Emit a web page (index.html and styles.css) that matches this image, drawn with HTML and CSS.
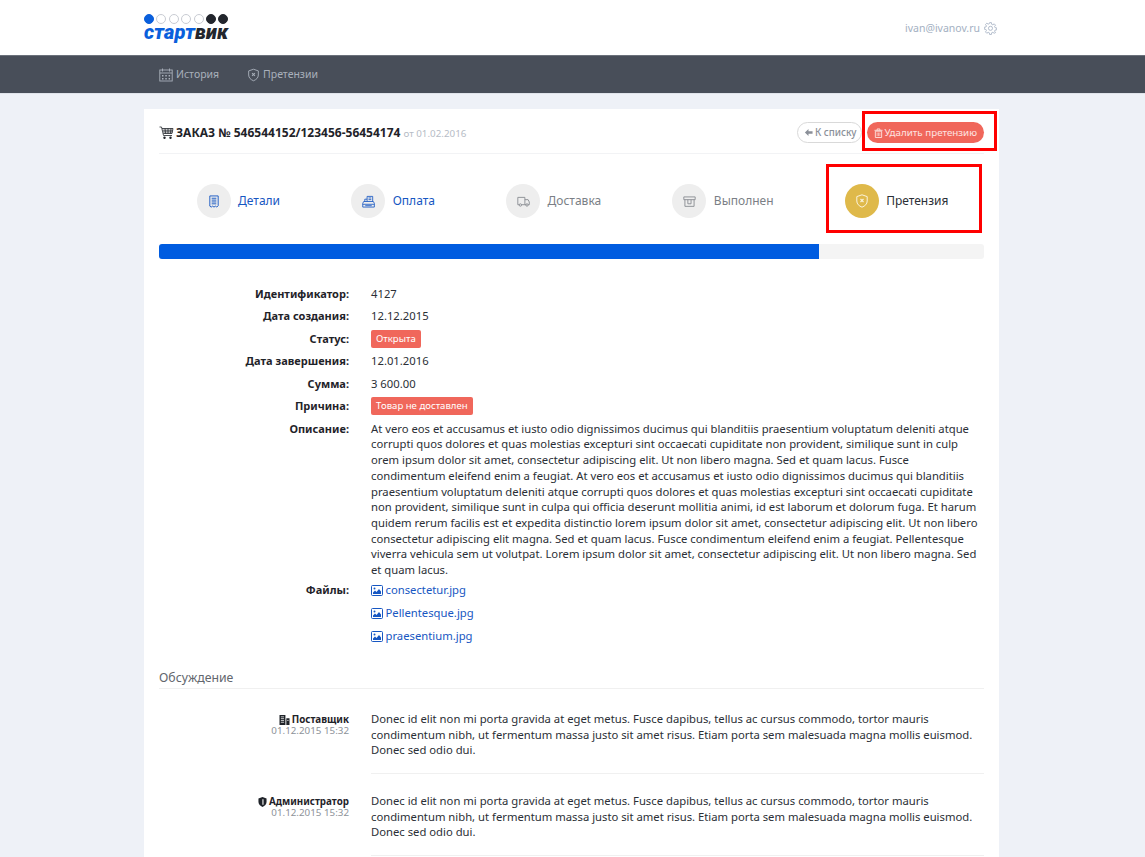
FILE: index.html
```html
<!DOCTYPE html>
<html lang="ru">
<head>
<meta charset="utf-8">
<title>Заказ</title>
<link rel="stylesheet" href="styles.css">
</head>
<body>
<svg class="defs" width="0" height="0">
  <symbol id="i-shield" viewBox="0 0 14 14"><path d="M7 .8 12.2 2.600V7c0 3-2.200 5-5.200 6.200C4 12 1.800 10 1.800 7V2.600Z" fill="none" stroke="currentColor" stroke-width="1"/><path d="M5.500 5 8.500 8M8.500 5 5.500 8" stroke="currentColor" stroke-width="1.100"/></symbol>
  <symbol id="i-img" viewBox="0 0 12 11"><rect x=".5" y=".5" width="11" height="10" rx="1" fill="none" stroke="currentColor"/><path d="M2 9V7.500L4 5.500 5.500 7 8 4l2 2.500V9Z" fill="currentColor"/><circle cx="3.500" cy="3.500" r="1" fill="currentColor"/></symbol>
</svg>
<div class="page">
  <header class="top">
    <div class="wrap top-row">
      <a class="logo">
        <span class="dots"><i class="dot blue"></i><i class="dot"></i><i class="dot"></i><i class="dot"></i><i class="dot"></i><i class="dot dark"></i><i class="dot dark"></i></span>
        <span class="logo-text"><span class="blue-t">старт</span>вик</span>
      </a>
      <div class="user">ivan@ivanov.ru
        <svg class="gear" viewBox="0 0 14 14" width="13" height="13"><path d="M6 .7h2l.3 1.800 1.200.5L11 2l1.400 1.400-1 1.500.5 1.200 1.800.3v2l-1.800.3-.5 1.200 1 1.500L11 12.100l-1.500-1-1.200.5-.3 1.800H6l-.3-1.800-1.200-.5-1.500 1L1.600 10.700l1-1.500-.5-1.200L.3 7.700v-2l1.800-.3.5-1.200-1-1.500L3 1.300l1.500 1 1.200-.5Z" fill="none" stroke="currentColor" stroke-width=".9"/><circle cx="7" cy="6.800" r="2.200" fill="none" stroke="currentColor" stroke-width=".9"/></svg>
      </div>
    </div>
  </header>
  <nav class="nav">
    <div class="wrap nav-row">
      <a class="nav-item"><svg viewBox="0 0 14 14" width="14" height="14"><rect x=".8" y="2" width="12.400" height="11" fill="none" stroke="currentColor" stroke-width=".9"/><path d="M3.500.5v3M10.500.5v3M.8 5h12.400" stroke="currentColor" fill="none" stroke-width=".9"/><path d="M3 7h1.500v1.500H3zM6.300 7h1.500v1.500H6.300zM9.600 7h1.500v1.500H9.600zM3 10h1.500v1.500H3zM6.300 10h1.500v1.500H6.300zM9.600 10h1.500v1.500H9.600z" fill="currentColor"/></svg>История</a>
      <a class="nav-item"><svg width="13" height="14"><use href="#i-shield"/></svg>Претензии</a>
    </div>
  </nav>
  <main class="wrap">
    <section class="card">
      <div class="card-head">
        <h1 class="order"><svg class="cart" viewBox="0 0 15 14" width="15" height="14"><path d="M.5 1h2l2 8.500h8.500M3 2.500h11l-1 5H4.300M3.600 4.200h10M4 5.900h9.500M6 2.500l.5 5M9 2.500v5M12 2.500l-.5 5" fill="none" stroke="currentColor" stroke-width=".8"/><circle cx="5.500" cy="11.800" r="1.200" fill="currentColor"/><circle cx="11.500" cy="11.800" r="1.200" fill="currentColor"/></svg><span class="order-no">ЗАКАЗ № 546544152/123456-56454174</span><small class="order-date">от 01.02.2016</small></h1>
        <div class="actions">
          <a class="btn btn-back"><svg viewBox="0 0 10 10" width="9" height="9"><path d="M5 1 1 5l4 4V6.500h4.500v-3H5Z" fill="currentColor"/></svg>К списку</a>
          <a class="btn btn-del"><svg viewBox="0 0 10 11" width="9" height="10"><path d="M.5 2.500h9M3.500 2.500V1h3v1.500" fill="none" stroke="currentColor"/><path d="M1.500 3.500h7V10.500h-7Z" fill="none" stroke="currentColor"/><path d="M3.500 5v4M5 5v4M6.500 5v4" stroke="currentColor" stroke-width=".7"/></svg>Удалить претензию</a>
        </div>
        <span class="mark mark-actions"></span>
      </div>
      <div class="steps">
        <div class="step done"><span class="circle"><svg viewBox="0 0 12 14" width="12" height="13"><path d="M1.500 1h9v10.500l-1.500 1.500-1.500-1-1.500 1-1.500-1-1.500 1-1.500-1Z" fill="none" stroke="currentColor"/><path d="M3.500 3.500h5M3.500 5.500h5M3.500 7.500h5M3.500 9.500h5" stroke="currentColor"/></svg></span>Детали</div>
        <div class="step done"><span class="circle"><svg viewBox="0 0 14 14" width="13" height="13"><path d="M5.500 7V1.500h6V7M1.800 7h10.400L13.300 9v4H.8V9ZM.8 10h12.500M3 7V4.500h2.500" fill="none" stroke="currentColor" stroke-width=".9"/><path d="M7 3.200h3M7 5h3M3.500 11.500h7" stroke="currentColor" stroke-width=".9"/></svg></span>Оплата</div>
        <div class="step"><span class="circle"><svg viewBox="0 0 14 12" width="13" height="11"><path d="M8.500 9.500V1.500H.8v8h1.500M5 9.500h3.500M8.500 4H12l1.300 2.500v3H12M10 9.500h-1.500" fill="none" stroke="currentColor"/><circle cx="3.600" cy="9.800" r="1.300" fill="none" stroke="currentColor"/><circle cx="10.800" cy="9.800" r="1.300" fill="none" stroke="currentColor"/></svg></span>Доставка</div>
        <div class="step"><span class="circle"><svg viewBox="0 0 14 12" width="13" height="11"><path d="M.8 1h12.400v3H.8ZM2 4v7.300h10V4M5.200 4v4.500h3.500V4" fill="none" stroke="currentColor"/></svg></span>Выполнен</div>
        <div class="step active"><span class="circle"><svg width="14" height="14"><use href="#i-shield"/></svg></span>Претензия<span class="mark mark-step"></span></div>
      </div>
      <div class="progress"><div class="progress-bar" style="width:80%"></div></div>
      <dl class="info">
        <div class="row"><dt>Идентификатор:</dt><dd>4127</dd></div>
        <div class="row"><dt>Дата создания:</dt><dd>12.12.2015</dd></div>
        <div class="row"><dt>Статус:</dt><dd><span class="badge">Открыта</span></dd></div>
        <div class="row"><dt>Дата завершения:</dt><dd>12.01.2016</dd></div>
        <div class="row"><dt>Сумма:</dt><dd>3 600.00</dd></div>
        <div class="row"><dt>Причина:</dt><dd><span class="badge">Товар не доставлен</span></dd></div>
        <div class="row row-desc"><dt>Описание:</dt><dd>At vero eos et accusamus et iusto odio dignissimos ducimus qui blanditiis praesentium voluptatum deleniti atque corrupti quos dolores et quas molestias excepturi sint occaecati cupiditate non provident, similique sunt in culp orem ipsum dolor sit amet, consectetur adipiscing elit. Ut non libero magna. Sed et quam lacus. Fusce condimentum eleifend enim a feugiat. At vero eos et accusamus et iusto odio dignissimos ducimus qui blanditiis praesentium voluptatum deleniti atque corrupti quos dolores et quas molestias excepturi sint occaecati cupiditate non provident, similique sunt in culpa qui officia deserunt mollitia animi, id est laborum et dolorum fuga. Et harum quidem rerum facilis est et expedita distinctio lorem ipsum dolor sit amet, consectetur adipiscing elit. Ut non libero consectetur adipiscing elit magna. Sed et quam lacus. Fusce condimentum eleifend enim a feugiat. Pellentesque viverra vehicula sem ut volutpat. Lorem ipsum dolor sit amet, consectetur adipiscing elit. Ut non libero magna. Sed et quam lacus.</dd></div>
        <div class="row"><dt>Файлы:</dt><dd class="files">
          <a class="file"><svg width="12" height="11"><use href="#i-img"/></svg>consectetur.jpg</a>
          <a class="file"><svg width="12" height="11"><use href="#i-img"/></svg>Pellentesque.jpg</a>
          <a class="file"><svg width="12" height="11"><use href="#i-img"/></svg>praesentium.jpg</a>
        </dd></div>
      </dl>
      <h2 class="section-title">Обсуждение</h2>
      <div class="comment">
        <div class="who"><b class="author"><svg viewBox="0 0 12 11" width="11" height="10"><path d="M.5 0H7v11H.5ZM8 3.500h3.500V11H8Z" fill="currentColor"/><path d="M2 2h3.500M2 4h3.500M2 6h3.500M2 8h3.500M9 6h1.500" stroke="#fff" stroke-width=".8"/></svg>Поставщик</b><span class="when">01.12.2015 15:32</span></div>
        <p class="text">Donec id elit non mi porta gravida at eget metus. Fusce dapibus, tellus ac cursus commodo, tortor mauris condimentum nibh, ut fermentum massa justo sit amet risus. Etiam porta sem malesuada magna mollis euismod. Donec sed odio dui.</p>
      </div>
      <div class="comment">
        <div class="who"><b class="author"><svg viewBox="0 0 10 11" width="9" height="10"><path d="M5 0 9.500 1.500V5.500c0 2.500-2 4.300-4.500 5.500C2.500 9.800.5 8 .5 5.500V1.500Z" fill="currentColor"/><path d="M5.500 2.500v6" stroke="#fff" stroke-width="1.200"/></svg>Администратор</b><span class="when">01.12.2015 15:32</span></div>
        <p class="text">Donec id elit non mi porta gravida at eget metus. Fusce dapibus, tellus ac cursus commodo, tortor mauris condimentum nibh, ut fermentum massa justo sit amet risus. Etiam porta sem malesuada magna mollis euismod. Donec sed odio dui.</p>
      </div>
    </section>
  </main>
</div>
</body>
</html>
```
FILE: styles.css
```css
* { box-sizing: border-box; }
html, body { margin: 0; height: 100%; overflow: hidden; }
body { background: #eef1f7; color: #2b2f36; font: 11.27px/15.68px "Noto Sans", sans-serif; }
.defs { position: absolute; }
.page { height: 857px; overflow: hidden; }
.wrap { width: 855px; margin: 0 146px 0 144px; }
.top { background: #fff; height: 55px; }
.top-row { display: flex; justify-content: space-between; align-items: center; height: 55px; padding-right: 2px; }
.logo { display: block; width: 86px; height: 41px; padding-top: 7px; }
.dots { display: flex; gap: 2.400px; }
.dot { width: 10px; height: 10px; border-radius: 50%; border: 1px solid #c9ccd3; background: #fff; }
.dot.blue { background: #0a5fdc; border-color: #0a5fdc; }
.dot.dark { background: #23262d; border-color: #23262d; }
.logo-text { display: block; font: italic 900 20px/17px Roboto, sans-serif; color: #23262d; }
.blue-t { color: #0a5fdc; }
.user { display: flex; align-items: center; gap: 4px; color: #a3b0c2; font-size: 10.5px; margin-top: 2px; }
.gear { color: #a3b0c2; }
.nav { height: 39px; background: #484e59; border-top: 1px solid #6b717b; border-bottom: 1px solid #dfe3ea; }
.nav-row { display: flex; gap: 28px; padding-left: 15px; height: 37px; align-items: center; }
.nav-item { display: flex; align-items: center; gap: 3px; color: #a9b0bb; font-size: 10.5px; }
.card { position: relative; background: #fff; margin-top: 15px; padding: 0 15px; min-height: 760px; }
.card-head { position: relative; display: flex; justify-content: space-between; align-items: center; height: 45px; padding-top: 3px; border-bottom: 1px solid #f2f3f5; }
.order { margin: 0; font-size: 12px; font-weight: 700; color: #1f2329; display: flex; align-items: center; gap: 2px; white-space: pre; }
.cart { color: #1f2329; }
.order-date { font-size: 9.8px; font-weight: 400; color: #b6bcc6; margin: 2px 0 0 1px; }
.actions { display: flex; gap: 5px; }
.btn { display: flex; align-items: center; gap: 2px; height: 21px; border-radius: 11px; padding: 0 7px; font-size: 9.8px; white-space: nowrap; }
.btn-back { border: 1px solid #d9d9d9; color: #8a8f98; font-weight: 500; padding: 0 4px 0 6px; }
.btn-del { background: #f0675b; color: #fde4e1; }
.mark { position: absolute; border: 3px solid #f00; pointer-events: none; }
.mark-actions { left: 703px; top: 2px; width: 135px; height: 40px; }
.steps { display: flex; justify-content: space-around; align-items: center; height: 90px; padding: 4px 0 0 2px; }
.step { position: relative; display: flex; align-items: center; gap: 7.500px; color: #7b7f86; font-size: 12px; }
.circle { display: flex; align-items: center; justify-content: center; width: 34px; height: 34px; border-radius: 50%; background: #eee; color: #8a8d93; }
.step.done { color: #1757c2; }
.step.done .circle { color: #1757c2; }
.step.active { color: #2b2f36; }
.step.active .circle { background: #dfb94a; color: #fbf3dc; }
.mark-step { left: -19px; top: -20px; width: 156px; height: 69px; }
.progress { height: 15px; background: #f4f4f4; border-radius: 3px; overflow: hidden; }
.progress-bar { height: 100%; background: #005ce0; }
.info { margin: 26.800px 0 0; }
.row { display: grid; grid-template-columns: 190px 1fr; column-gap: 22px; min-height: 22.500px; align-items: start; }
.row dt { text-align: right; font-weight: 700; color: #1f2329; font-size: 11px; }
.row dd { margin: 0; color: #2b2f36; }
.row-desc { padding-bottom: 4.500px; }
.badge { display: inline-block; background: #f0675b; color: #fff; font-size: 9.600px; line-height: 14px; padding: 2px 5px; border-radius: 2px; margin-top: -1px; vertical-align: top; }
.files { display: flex; flex-direction: column; gap: 7.400px; }
.file { display: flex; align-items: center; gap: 2.500px; color: #1757c2; }
.section-title { margin: 24.500px 0 3.500px; font-size: 12.25px; font-weight: 400; color: #62666d; padding-bottom: 1px; line-height: 18px; border-bottom: 1px solid #f0f0f0; }
.comment { display: grid; grid-template-columns: 190px 1fr; column-gap: 22px; padding-top: 19px; }
.who { display: flex; flex-direction: column; align-items: flex-end; line-height: 11px; padding-top: 3px; }
.author { display: flex; align-items: center; gap: 2px; font-size: 9.8px; font-weight: 700; color: #1f2329; }
.when { font-size: 9.8px; color: #8d9299; }
.text { margin: 0; padding-bottom: 15px; border-bottom: 1px solid #f0f0f0; }
```
